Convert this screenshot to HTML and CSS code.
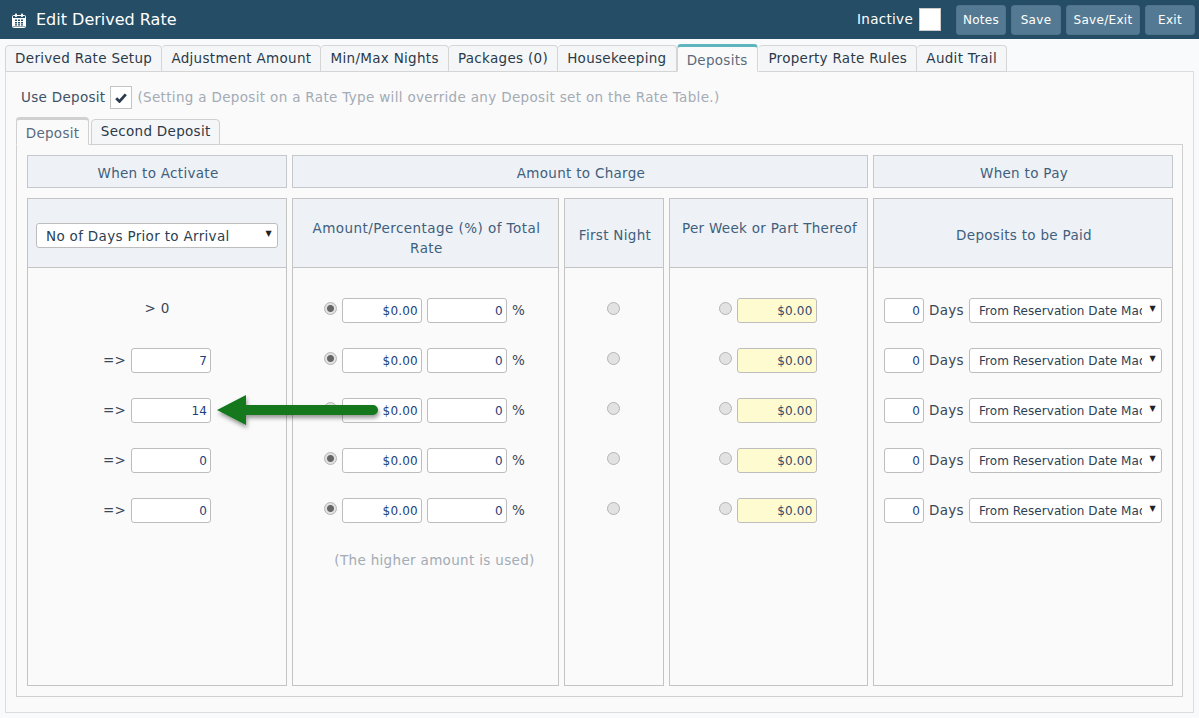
FILE: index.html
```html
<!DOCTYPE html>
<html lang="en">
<head>
  <meta charset="UTF-8" />
  <title>Edit Derived Rate</title>
  <link rel="stylesheet" href="styles.css">
</head>
<body>
  <header class="topbar">
    <svg class="cal-icon" viewBox="0 0 14 15" width="14" height="15">
      <path d="M1.5 2.5h11a1 1 0 0 1 1 1v10a1 1 0 0 1-1 1h-11a1 1 0 0 1-1-1v-10a1 1 0 0 1 1-1z" fill="none" stroke="#fff" stroke-width="1"/>
      <rect x="3" y="0.5" width="2" height="3.5" rx="0.8" fill="#fff"/>
      <rect x="9" y="0.5" width="2" height="3.5" rx="0.8" fill="#fff"/>
      <path d="M1 5h12v8.5H1z" fill="#fff"/>
      <path d="M3 6.5h2v1.5H3zM6 6.5h2v1.5H6zM9 6.5h2v1.5H9zM3 9h2v1.5H3zM6 9h2v1.5H6zM9 9h2v1.5H9zM3 11.300h2v1.200H3zM6 11.300h2v1.200H6zM9 11.300h2v1.200H9z" fill="#264d66"/>
    </svg>
    <h1>Edit Derived Rate</h1>
    <div class="top-actions">
      <span class="inactive-label">Inactive</span>
      <span class="inactive-box"></span>
      <button class="top-btn btn-notes">Notes</button>
      <button class="top-btn btn-save">Save</button>
      <button class="top-btn btn-saveexit">Save/Exit</button>
      <button class="top-btn btn-exit">Exit</button>
    </div>
  </header>

  <main class="page">
    <nav class="tabs">
      <a class="tab">Derived Rate Setup</a>
      <a class="tab">Adjustment Amount</a>
      <a class="tab">Min/Max Nights</a>
      <a class="tab">Packages (0)</a>
      <a class="tab">Housekeeping</a>
      <a class="tab active">Deposits</a>
      <a class="tab">Property Rate Rules</a>
      <a class="tab">Audit Trail</a>
    </nav>

    <section class="panel">
      <div class="use-deposit">
        <span class="use-label">Use Deposit</span>
        <span class="check-box">
          <svg viewBox="0 0 12 10" width="12" height="10"><path d="M1.200 5.200l3.300 3.200 6.300-7" fill="none" stroke="#2a3b4d" stroke-width="2.800"/></svg>
        </span>
        <span class="use-label hint">(Setting a Deposit on a Rate Type will override any Deposit set on the Rate Table.)</span>
      </div>

      <nav class="tabs sub-tabs">
        <a class="tab active">Deposit</a>
        <a class="tab">Second Deposit</a>
      </nav>

      <div class="sub-panel">
        <div class="deposit-grid">
          <div class="band band-activate">When to Activate</div>
          <div class="band band-amount">Amount to Charge</div>
          <div class="band band-pay">When to Pay</div>

          <div class="col">
            <div class="col-head head-select">
              <div class="select-wrap select-wide">
                <select><option>No of Days Prior to Arrival</option></select>
              </div>
            </div>
            <div class="col-body">
              <div class="row"><span class="first-days">&gt; 0</span></div>
              <div class="row"><span>=&gt;</span><input class="num" type="text" value="7"></div>
              <div class="row"><span>=&gt;</span><input class="num" type="text" value="14"></div>
              <div class="row"><span>=&gt;</span><input class="num" type="text" value="0"></div>
              <div class="row"><span>=&gt;</span><input class="num" type="text" value="0"></div>
            </div>
          </div>

          <div class="col">
            <div class="col-head head-two">Amount/Percentage (%) of Total Rate</div>
            <div class="col-body nudge">
              <div class="row"><input class="radio" type="radio" name="r1" checked><input class="num" type="text" value="$0.00"><input class="num" type="text" value="0"><span>%</span></div>
              <div class="row"><input class="radio" type="radio" name="r2" checked><input class="num" type="text" value="$0.00"><input class="num" type="text" value="0"><span>%</span></div>
              <div class="row"><input class="radio" type="radio" name="r3" checked><input class="num" type="text" value="$0.00"><input class="num" type="text" value="0"><span>%</span></div>
              <div class="row"><input class="radio" type="radio" name="r4" checked><input class="num" type="text" value="$0.00"><input class="num" type="text" value="0"><span>%</span></div>
              <div class="row"><input class="radio" type="radio" name="r5" checked><input class="num" type="text" value="$0.00"><input class="num" type="text" value="0"><span>%</span></div>
              <div class="row hint">(The higher amount is used)</div>
            </div>
          </div>

          <div class="col">
            <div class="col-head head-one">First Night</div>
            <div class="col-body nudge">
              <div class="row"><input class="radio" type="radio" name="r1"></div>
              <div class="row"><input class="radio" type="radio" name="r2"></div>
              <div class="row"><input class="radio" type="radio" name="r3"></div>
              <div class="row"><input class="radio" type="radio" name="r4"></div>
              <div class="row"><input class="radio" type="radio" name="r5"></div>
            </div>
          </div>

          <div class="col">
            <div class="col-head head-week">Per Week or Part Thereof</div>
            <div class="col-body nudge">
              <div class="row"><input class="radio" type="radio" name="r1"><input class="num yellow" type="text" value="$0.00"></div>
              <div class="row"><input class="radio" type="radio" name="r2"><input class="num yellow" type="text" value="$0.00"></div>
              <div class="row"><input class="radio" type="radio" name="r3"><input class="num yellow" type="text" value="$0.00"></div>
              <div class="row"><input class="radio" type="radio" name="r4"><input class="num yellow" type="text" value="$0.00"></div>
              <div class="row"><input class="radio" type="radio" name="r5"><input class="num yellow" type="text" value="$0.00"></div>
            </div>
          </div>

          <div class="col">
            <div class="col-head head-one">Deposits to be Paid</div>
            <div class="col-body">
              <div class="row"><input class="num days" type="text" value="0"><span>Days</span><div class="select-wrap"><select><option>From Reservation Date Made</option></select></div></div>
              <div class="row"><input class="num days" type="text" value="0"><span>Days</span><div class="select-wrap"><select><option>From Reservation Date Made</option></select></div></div>
              <div class="row"><input class="num days" type="text" value="0"><span>Days</span><div class="select-wrap"><select><option>From Reservation Date Made</option></select></div></div>
              <div class="row"><input class="num days" type="text" value="0"><span>Days</span><div class="select-wrap"><select><option>From Reservation Date Made</option></select></div></div>
              <div class="row"><input class="num days" type="text" value="0"><span>Days</span><div class="select-wrap"><select><option>From Reservation Date Made</option></select></div></div>
            </div>
          </div>
        </div>
      </div>
    </section>
  </main>

  <!-- annotation arrow drawn over the form -->
  <svg class="arrow" width="180" height="44" viewBox="0 0 180 44">
    <defs>
      <filter id="arrow-shadow" x="-10%" y="-30%" width="120%" height="170%">
        <feDropShadow dx="1" dy="3" stdDeviation="2" flood-color="#000" flood-opacity="0.4"/>
      </filter>
    </defs>
    <path d="M3 20L32 5V15H159a5 5 0 0 1 0 10H32V35z" fill="#12781f" filter="url(#arrow-shadow)"/>
  </svg>
</body>
</html>
```

FILE: styles.css
```css
* {
  box-sizing: border-box;
  margin: 0;
  padding: 0;
}

html, body {
  height: 718px;
  overflow: hidden;
}

body {
  font-family: "DejaVu Sans", Verdana, sans-serif;
  font-size: 13.5px;
  letter-spacing: 0.3px;
  color: #3a4756;
  background-color: #f9fafc;
  position: relative;
}

.topbar {
  height: 39px;
  background-color: #264d66;
  display: flex;
  align-items: center;
  padding: 0 4px 0 12px;
  color: #fff;
}

.cal-icon {
  margin-right: 10px;
  margin-top: 2px;
}

.topbar h1 {
  font-size: 16px;
  font-weight: normal;
  letter-spacing: 0;
}

.top-actions {
  margin-left: auto;
  display: flex;
  align-items: center;
}

.inactive-label {
  margin: 0 6px 2px 0;
}

.inactive-box {
  width: 22px;
  height: 23px;
  background-color: #fff;
  border: 1px solid #ccc;
  margin-right: 15px;
}

.top-btn {
  height: 30px;
  margin-right: 5px;
  border: 1px solid #4f7389;
  border-radius: 3px;
  background-color: #547a93;
  color: #fff;
  font-family: inherit;
  font-size: 12px;
  letter-spacing: 0.3px;
}

.top-btn:last-child {
  margin-right: 0;
}

.btn-notes { width: 50px; }
.btn-save { width: 50px; }
.btn-saveexit { width: 74px; }
.btn-exit { width: 50px; }

.page {
  padding: 5px 5px 0;
}

.tabs {
  display: flex;
  height: 28px;
  align-items: flex-end;
  position: relative;
  z-index: 1;
  margin-bottom: -1px;
}

.tab {
  height: 27px;
  padding: 0 9.1px;
  line-height: 25px;
  color: #2b3a4a;
  background-color: #f5f6f7;
  border: 1px solid #d5d5d5;
  border-left-width: 0;
  border-radius: 4px 4px 0 0;
  white-space: nowrap;
}

.tab:first-child {
  border-left-width: 1px;
}

.tab.active {
  height: 28px;
  line-height: 26px;
  margin-right: 1.5px;
  color: #5b6b7c;
  background-color: #fafafa;
  border-top: 3px solid #5fb5bd;
  border-left-width: 1px;
  border-bottom-color: #fafafa;
}

.panel {
  height: 642px;
  background-color: #fafafa;
  border: 1px solid #dcdcdc;
  padding: 0 10px;
}

.use-deposit {
  height: 46px;
  display: flex;
  align-items: center;
  padding: 5px 0 0 5px;
  color: #3f5165;
}

.use-label {
  margin-bottom: 2px;
}

.check-box {
  width: 22px;
  height: 23px;
  margin: 0 5px;
  background-color: #fff;
  border: 1px solid #c4c4c4;
  display: flex;
  align-items: center;
  justify-content: center;
}

.hint {
  color: #a3abb5;
  letter-spacing: 0.33px;
}

.sub-tabs {
  height: 27px;
}

.sub-tabs .tab {
  height: 26px;
  padding: 0 8.7px;
  line-height: 23px;
  border-color: #d0d0d0;
}

.sub-tabs .tab.active {
  height: 28px;
  line-height: 27px;
  border-right-width: 1px;
  margin-right: 2px;
  border-bottom-color: #fafafa;
}

.sub-tabs .tab:last-child {
  border-left-width: 1px;
}

.sub-panel {
  height: 553px;
  border: 1px solid #d0d0d0;
  padding: 10px;
}

.deposit-grid {
  display: grid;
  grid-template-columns: 260px 267px 100px 199px 300px;
  grid-template-rows: 33px 488px;
  gap: 10px 5px;
}

.band {
  display: flex;
  align-items: center;
  justify-content: center;
  padding: 2px 0 0 2px;
  background-color: #eef1f5;
  border: 1px solid #c4c8cc;
  color: #3e5f7d;
}

.band-amount {
  grid-column: 2 / 5;
}

.col {
  display: flex;
  flex-direction: column;
  border: 1px solid #c4c4c4;
}

.col-head {
  height: 69px;
  flex-shrink: 0;
  display: flex;
  align-items: center;
  justify-content: center;
  text-align: center;
  padding: 0 8px 0 10px;
  line-height: 20px;
  background-color: #eef1f5;
  border-bottom: 1px solid #c4c4c4;
  color: #3e5f7d;
}

.head-one {
  padding-top: 4px;
}

.head-select {
  padding: 4px 8px 0;
}

.head-two {
  padding-top: 10px;
  letter-spacing: 0.45px;
}

.head-week {
  padding-bottom: 10px;
}

.col-body {
  padding-top: 17px;
}

.col-body.nudge {
  padding-right: 2px;
}

.row {
  height: 50px;
  display: flex;
  align-items: center;
  justify-content: center;
  gap: 5px;
}

.row.hint {
  padding-left: 20px;
}

.first-days {
  margin-bottom: 5px;
}

.num {
  width: 80px;
  height: 25px;
  padding: 2px 3px 0;
  text-align: right;
  font-family: inherit;
  font-size: 12px;
  letter-spacing: 0.2px;
  color: #1d3f7a;
  background-color: #fff;
  border: 1px solid #bdbdbd;
  border-radius: 3px;
}

.num.yellow {
  background-color: #fffbd0;
  color: #2d4a6d;
}

.num.days {
  width: 40px;
}

.radio {
  appearance: none;
  width: 13px;
  height: 13px;
  margin-bottom: 3px;
  border: 1px solid #b4b4b4;
  border-radius: 50%;
  background-color: #e2e2e2;
}

.radio:checked {
  background: radial-gradient(circle, #666 0, #666 3px, #e2e2e2 4px);
}

.select-wrap {
  width: 193px;
  height: 25px;
  position: relative;
  background-color: #fff;
  border: 1px solid #bdbdbd;
  border-radius: 3px;
}

.select-wrap::after {
  content: "▼";
  position: absolute;
  top: 6px;
  right: 5px;
  font-size: 8px;
  line-height: 8px;
  color: #222;
}

.select-wrap select {
  appearance: none;
  width: 100%;
  height: 100%;
  padding: 2px 19px 0 9px;
  border: 0;
  background: none;
  font-family: inherit;
  font-size: 12px;
  letter-spacing: 0.05px;
  color: #2b3f55;
}

.select-wide {
  width: 242px;
}

.select-wide select {
  font-size: 13.5px;
  letter-spacing: 0.32px;
}

.arrow {
  position: absolute;
  left: 214px;
  top: 390px;
}
```
